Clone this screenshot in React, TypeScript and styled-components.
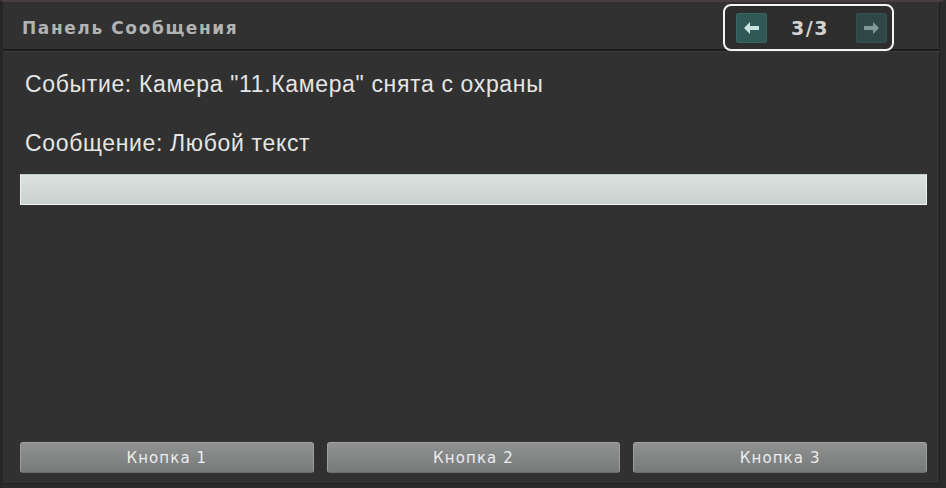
import styled, { createGlobalStyle } from "styled-components";

const GlobalStyle = createGlobalStyle`
  html, body {
    margin: 0;
    padding: 0;
    background: #2f302f;
  }
`;

export default function App() {
  return (
    <>
      <GlobalStyle />
      <Panel>
        <Header>
          <Title>Панель Сообщения</Title>
          <Pager>
            <ArrowButton $active>
              <svg width="16" height="12" viewBox="0 0 16 12">
                <path d="M0 6 L6 0 L6 4 L15 4 L15 8 L6 8 L6 12 Z" fill="#c7e4e0" />
              </svg>
            </ArrowButton>
            <PageText>3/3</PageText>
            <ArrowButton>
              <svg width="16" height="12" viewBox="0 0 16 12">
                <path d="M16 6 L10 0 L10 4 L1 4 L1 8 L10 8 L10 12 Z" fill="#7f9a96" />
              </svg>
            </ArrowButton>
          </Pager>
        </Header>
        <Body>
          <Line>Событие: Камера "11.Камера" снята с охраны</Line>
          <Line>Сообщение: Любой текст</Line>
          <InputBar />
          <Spacer />
          <ButtonRow>
            <ActionButton>Кнопка 1</ActionButton>
            <ActionButton>Кнопка 2</ActionButton>
            <ActionButton>Кнопка 3</ActionButton>
          </ButtonRow>
        </Body>
      </Panel>
    </>
  );
}

const Panel = styled.div`
  display: flex;
  flex-direction: column;
  width: 946px;
  height: 488px;
  box-sizing: border-box;
  background: #303130;
  border-top: 2px solid #4a3f40;
  border-left: 3px solid #252625;
  border-right: 6px solid #2a2b2a;
  border-bottom: 4px solid #282928;
  box-shadow: inset -1px 0 0 #1e1f1e, inset 0 -1px 0 #1e1f1e;
`;

const Header = styled.div`
  display: flex;
  align-items: flex-start;
  justify-content: space-between;
  height: 47px;
  padding: 0 46px 0 19px;
  border-bottom: 2px solid #1c1d1c;
  box-shadow: 0 1px 0 #3a3b3a;
`;

const Title = styled.div`
  font-family: "DejaVu Sans", sans-serif;
  font-weight: bold;
  font-size: 17px;
  letter-spacing: 1.6px;
  color: #b2b3b2;
  line-height: 20px;
  padding-top: 16px;
`;

const Pager = styled.div`
  display: flex;
  align-items: center;
  justify-content: space-between;
  width: 171px;
  height: 47px;
  margin-top: 2px;
  padding: 0 5px 0 11px;
  box-sizing: border-box;
  border: 2px solid #f4f4f4;
  border-radius: 8px;
  background: #2c2d2c;
  position: relative;
  z-index: 1;
`;

const ArrowButton = styled.div<{ $active?: boolean }>`
  display: flex;
  align-items: center;
  justify-content: center;
  width: 31px;
  height: 30px;
  border-radius: 3px;
  background: ${(p) => (p.$active ? "#2f5856" : "#2f4745")};
  box-shadow: inset 0 0 0 1px ${(p) => (p.$active ? "#366462" : "#34504e")};
`;

const PageText = styled.div`
  font-family: "DejaVu Sans", sans-serif;
  font-weight: bold;
  font-size: 19px;
  letter-spacing: 1.5px;
  color: #d2d3d2;
  padding-right: 3px;
`;

const Body = styled.div`
  display: flex;
  flex-direction: column;
  flex: 1;
  padding: 19px 13px 11px 17px;
`;

const Line = styled.div`
  font-family: "Liberation Sans", Arial, sans-serif;
  font-size: 23px;
  letter-spacing: 0.65px;
  color: #e4e5e4;
  line-height: 28px;
  padding-left: 5px;
  margin-bottom: 31px;

  &:nth-of-type(2) {
    margin-bottom: 17px;
  }
`;

const InputBar = styled.div`
  height: 31px;
  box-sizing: border-box;
  background: linear-gradient(#dbe2df, #c9d1cd);
  border: 1px solid #eef3f1;
  border-top-color: #c4ccc8;
`;

const Spacer = styled.div`
  flex: 1;
`;

const ButtonRow = styled.div`
  display: grid;
  grid-template-columns: repeat(3, 1fr);
  gap: 13px;
`;

const ActionButton = styled.div`
  display: flex;
  align-items: center;
  justify-content: center;
  height: 31px;
  box-sizing: border-box;
  border-radius: 3px;
  background: linear-gradient(#8f9291, #777a79);
  border: 1px solid #9a9d9c;
  border-top-color: #a0a3a2;
  border-bottom-color: #6a6d6c;
  font-family: "DejaVu Sans", sans-serif;
  font-size: 15px;
  letter-spacing: 1.1px;
  color: #eceded;
`;
